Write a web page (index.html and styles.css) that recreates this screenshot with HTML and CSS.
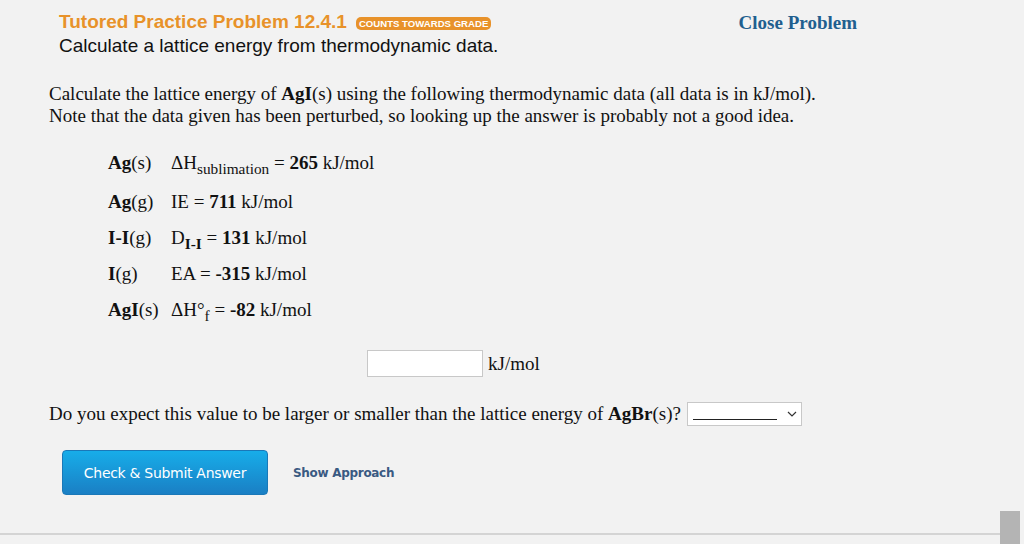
FILE: index.html
```html
<!DOCTYPE html>
<html>
<head>
<meta charset="utf-8">
<link rel="stylesheet" href="styles.css">
</head>
<body>
<div class="page">
  <header class="header">
    <div class="titles">
      <div class="title-row">
        <span class="title">Tutored Practice Problem 12.4.1</span>
        <span class="badge">COUNTS TOWARDS GRADE</span>
      </div>
      <div class="subtitle">Calculate a lattice energy from thermodynamic data.</div>
    </div>
    <a class="close">Close Problem</a>
  </header>

  <p class="intro">Calculate the lattice energy of <b>AgI</b>(s) using the following thermodynamic data (all data is in kJ/mol).<br>Note that the data given has been perturbed, so looking up the answer is probably not a good idea.</p>

  <table class="data">
    <tr class="r1"><td><b>Ag</b>(s)</td><td>&Delta;H<sub>sublimation</sub> = <b>265</b> kJ/mol</td></tr>
    <tr class="r2"><td><b>Ag</b>(g)</td><td>IE = <b>711</b> kJ/mol</td></tr>
    <tr class="r3"><td><b>I-I</b>(g)</td><td>D<sub><b>I-I</b></sub> = <b>131</b> kJ/mol</td></tr>
    <tr class="r4"><td><b>I</b>(g)</td><td class="ea">EA = <b>-315</b> kJ/mol</td></tr>
    <tr class="r5"><td><b>AgI</b>(s)</td><td>&Delta;H&deg;<sub>f</sub> = <b>-82</b> kJ/mol</td></tr>
  </table>

  <div class="answer">
    <span class="input"></span>
    <span class="unit">kJ/mol</span>
  </div>

  <div class="question">
    <span>Do you expect this value to be larger or smaller than the lattice energy of <b>AgBr</b>(s)?</span>
    <span class="select"><span class="blank"></span><svg class="chev" width="10" height="6" viewBox="0 0 10 6"><path d="M1 1 L5 5 L9 1" fill="none" stroke="#333" stroke-width="1.2"/></svg></span>
  </div>

  <div class="actions">
    <span class="btn">Check &amp; Submit Answer</span>
    <a class="approach">Show Approach</a>
  </div>
</div>
<div class="bottom-line"></div>
<div class="scroll-thumb"></div>
</body>
</html>
```
FILE: styles.css
```css
html, body {
  margin: 0;
  padding: 0;
  background: #f2f2f2;
  height: 544px;
  overflow: hidden;
}
.page {
  padding: 11px 0 0 49px;
  width: 857px;
  height: 521px;
  box-sizing: border-box;
}
.header {
  display: flex;
  justify-content: space-between;
  align-items: flex-start;
  padding-left: 10px;
}
.title-row {
  display: flex;
  align-items: center;
  gap: 9px;
  height: 22px;
}
.title {
  font-family: "Liberation Sans", Arial, sans-serif;
  font-weight: bold;
  font-size: 19px;
  color: #e8922a;
}
.badge {
  font-family: "Liberation Sans", Arial, sans-serif;
  font-weight: bold;
  font-size: 9.6px;
  color: #fff;
  background: #e8922a;
  border-radius: 5px;
  padding: 1px 3px;
  line-height: 11px;
  margin-top: 3px;
}
.subtitle {
  font-family: "Liberation Sans", Arial, sans-serif;
  font-size: 19px;
  color: #111;
  margin-top: 2px;
  line-height: 22px;
}
.close {
  font-family: "Liberation Serif", "Times New Roman", serif;
  font-weight: bold;
  font-size: 19px;
  color: #1f5f8f;
  margin-top: 1px;
}
.intro {
  font-family: "Liberation Serif", "Times New Roman", serif;
  font-size: 19px;
  line-height: 22px;
  color: #111;
  margin: 26px 0 0 0;
}
.data {
  font-family: "Liberation Serif", "Times New Roman", serif;
  font-size: 19px;
  color: #111;
  border-collapse: collapse;
  margin: 16px 0 0 59px;
}
.data td {
  padding: 0 5px 0 0;
  height: 36px;
  vertical-align: middle;
  white-space: nowrap;
}
.data td:first-child {
  width: 58px;
}
.data sub {
  font-size: 15.3px;
  vertical-align: -5px;
  line-height: 0;
}
.data .r1 td { height: 40px; }
.data .r2 td { height: 37px; }
.data .r3 td { height: 35px; }
.data .r4 td { height: 38px; }
.data .r5 td { height: 34px; }
.answer {
  display: flex;
  align-items: center;
  gap: 5px;
  margin: 23px 0 0 318px;
}
.input {
  width: 114px;
  height: 25px;
  background: #fff;
  border: 1px solid #c8c8c8;
}
.unit {
  font-family: "Liberation Serif", "Times New Roman", serif;
  font-size: 19px;
  color: #111;
}
.question {
  display: flex;
  align-items: center;
  gap: 6px;
  margin-top: 25px;
  font-family: "Liberation Serif", "Times New Roman", serif;
  font-size: 19px;
  color: #111;
  white-space: nowrap;
}
.select {
  display: flex;
  align-items: center;
  justify-content: space-between;
  width: 104px;
  height: 22px;
  background: #fff;
  border: 1px solid #c8c8c8;
  box-sizing: content-box;
  padding: 0 4px 0 5px;
}
.blank {
  width: 84px;
  height: 1px;
  background: #222;
  margin-top: 10px;
}
.actions {
  display: flex;
  align-items: center;
  gap: 25px;
  margin: 24px 0 0 13px;
}
.btn {
  display: flex;
  align-items: center;
  justify-content: center;
  width: 206px;
  height: 45px;
  box-sizing: border-box;
  border-radius: 4px;
  background: linear-gradient(#17ade9, #1a7fc4);
  border: 1px solid #1a78b8;
  color: #fff;
  font-family: "DejaVu Sans", Verdana, sans-serif;
  font-size: 14px;
  letter-spacing: -0.3px;
}
.approach {
  font-family: "DejaVu Sans", Verdana, sans-serif;
  font-weight: bold;
  font-size: 12px;
  color: #3a5a82;
  letter-spacing: -0.3px;
}
.bottom-line {
  height: 2px;
  width: 1000px;
  background: #d4d4d4;
  margin-top: 12px;
}
.scroll-thumb {
  position: absolute;
  left: 1000px;
  top: 511px;
  width: 20px;
  height: 33px;
  background: #b4b4b4;
}
```
